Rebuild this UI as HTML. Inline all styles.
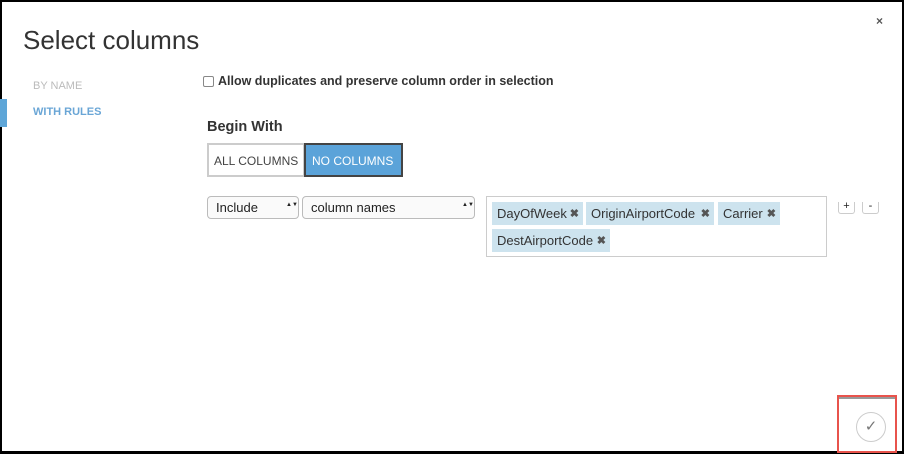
<!DOCTYPE html>
<html><head><style>
*{box-sizing:border-box;margin:0;padding:0}
body{width:904px;height:454px;background:#000;position:relative;overflow:hidden;font-family:"Liberation Sans",sans-serif;color:#444}
#m{position:absolute;left:2px;top:2px;width:900px;height:449px;background:#fff}
.a{position:absolute;white-space:nowrap}
.sel{position:absolute;height:23px;border:1px solid #bbb;border-radius:4px;background:#fafafa;font-size:13px;padding:3px 8px;color:#222}
.sel i{position:absolute;right:6px;top:6px;font-size:6px;line-height:5px;font-style:normal;color:#222;white-space:normal;width:6px;text-align:center}
.tag{position:absolute;height:23px;background:#cde3ee;font-size:13px;padding:4px 5px;color:#333}
.tag b{position:absolute;right:4px;top:5px;font-size:11px;color:#555}
.pm{position:absolute;top:200px;width:17px;height:12px;border:1px solid #ccc;border-top:none;border-radius:0 0 3px 3px;font-size:11px;line-height:8px;text-align:center;color:#222}
</style></head><body><div id="m">
<div class="a" style="left:874px;top:12px;font-size:12px;color:#555;font-weight:bold">×</div>
<div class="a" style="left:21px;top:23px;font-size:26px;color:#333">Select columns</div>
<div class="a" style="left:31px;top:78px;font-size:11px;color:#bbb">BY NAME</div>
<div class="a" style="left:-2px;top:97px;width:7px;height:28px;background:#5ea6d8"></div>
<div class="a" style="left:31px;top:104px;font-size:11px;color:#6aa6d6;font-weight:bold">WITH RULES</div>
<div class="a" style="left:201px;top:74px;width:11px;height:11px;border:1px solid #888;border-radius:2px"></div>
<div class="a" style="left:216px;top:72px;font-size:12.5px;font-weight:bold;color:#333">Allow duplicates and preserve column order in selection</div>
<div class="a" style="left:205px;top:117px;font-size:14.5px;font-weight:bold;color:#333">Begin With</div>
<div class="a" style="left:205px;top:141px;width:98px;height:34px;border:2px solid #ccc;font-size:12px;padding:9px 0 0 5px;color:#444">ALL COLUMNS</div>
<div class="a" style="left:302px;top:141px;width:99px;height:34px;border:2px solid #444;background:#5ba3d9;font-size:12px;padding:9px 0 0 6px;color:#fff">NO COLUMNS</div>
<div class="sel" style="left:205px;top:194px;width:92px">Include<i>▲▼</i></div>
<div class="sel" style="left:300px;top:194px;width:173px">column names<i>▲▼</i></div>
<div class="a" style="left:484px;top:194px;width:341px;height:61px;border:1px solid #ccc"></div>
<div class="tag" style="left:490px;top:200px;width:91px">DayOfWeek<b>✖</b></div>
<div class="tag" style="left:584px;top:200px;width:128px">OriginAirportCode<b>✖</b></div>
<div class="tag" style="left:716px;top:200px;width:62px">Carrier<b>✖</b></div>
<div class="tag" style="left:490px;top:227px;width:118px">DestAirportCode<b>✖</b></div>
<div class="pm" style="left:836px">+</div>
<div class="pm" style="left:860px">-</div>
<div class="a" style="left:835px;top:393px;width:60px;height:58px;border:2px solid #e8534c"></div>
<div class="a" style="left:837px;top:395px;width:56px;height:2px;background:#999"></div>
<div class="a" style="left:854px;top:410px;width:30px;height:30px;border:1px solid #ccc;border-radius:50%;text-align:center;font-size:15px;line-height:28px;color:#777">✓</div>
</div></body></html>
